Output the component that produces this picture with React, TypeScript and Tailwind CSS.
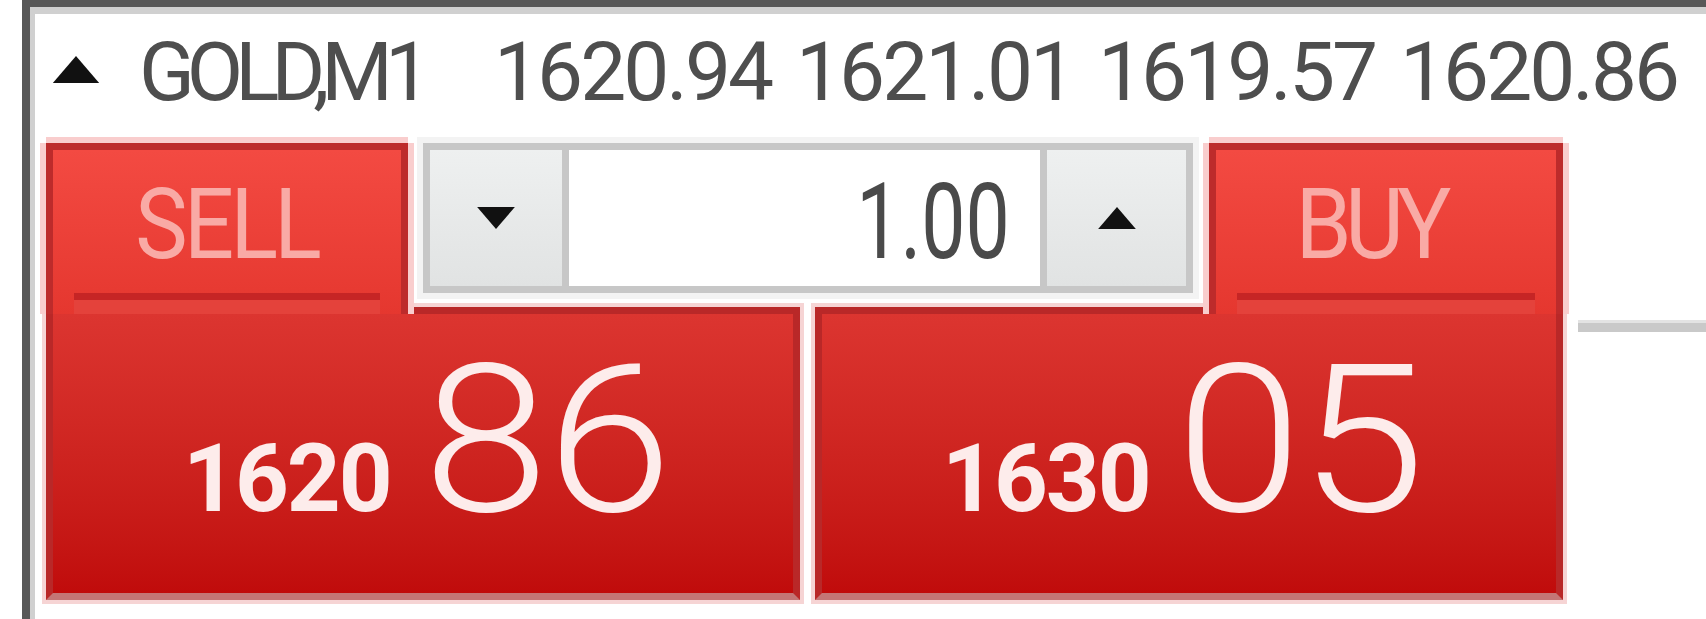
import React from "react";

const QUOTES = ["1620.94", "1621.01", "1619.57", "1620.86"];

/**
 * Small filled triangles used in the header and the lot spinner
 */
const Triangle = ({ up, className }: { up: boolean; className: string }) => (
  <svg className={className} viewBox="0 0 48 28" fill="#111">
    {up ? <polygon points="24,0 48,28 0,28" /> : <polygon points="0,0 48,0 24,28" />}
  </svg>
);

/**
 * Chart header: symbol, timeframe and OHLC values
 */
const ChartHeader: React.FC = () => (
  <div className="flex items-start pt-[17px] font-['Roboto','Liberation_Sans',sans-serif] text-[82px] leading-none text-[#4e4e4e]">
    <Triangle up className="ml-[17px] mt-[25px] w-[48px] h-[27px] shrink-0" />
    <span className="ml-[39px] w-[355px] shrink-0 tracking-[-8px]">GOLD,M1</span>
    {QUOTES.map((q) => (
      <span key={q} className="w-[302px] shrink-0 tracking-[-3px]">
        {q}
      </span>
    ))}
  </div>
);

interface TradeTabProps {
  label: string;
  className: string;
  labelClass: string;
}

// Red SELL / BUY tab sitting on top of its price box
const TradeTab: React.FC<TradeTabProps> = ({ label, className, labelClass }) => (
  <div
    className={`relative z-10 h-[171px] flex flex-col items-center border-[7px] border-b-0 border-[#bd2b2b] bg-linear-to-b from-[#f34a42] to-[#e5372f] shadow-[0_-6px_0_0_#f9cdcd,6px_0_0_0_#f9cdcd,-6px_0_0_0_#f9cdcd] ${className}`}
  >
    <span className={`inline-block pt-[26px] text-[98px] leading-none text-[#f9aaa5] ${labelClass}`}>{label}</span>
    <div className="mt-[19px] h-[7px] self-stretch mx-[21px] bg-[#c62525]" />
    <div className="flex-1 self-stretch mx-[21px] bg-[#e4423b]" />
  </div>
);

// Lot size spinner between the two tabs
const LotSpinner: React.FC = () => (
  <div className="ml-[15px] w-[770px] h-[150px] flex border-[7px] border-[#c7c7c7] shadow-[0_0_0_6px_#f3f3f3]">
    <div className="w-[132px] flex items-center justify-center bg-linear-to-b from-[#eef0f0] to-[#e1e3e3]">
      <Triangle up={false} className="w-[40px] h-[22px]" />
    </div>
    <div className="w-[7px] bg-[#c7c7c7]" />
    <div className="w-[471px] flex justify-end items-start pr-[30px] pt-[20px] bg-white">
      <span className="inline-block origin-right scale-x-75 text-[105px] leading-none text-[#4a4a4a]">1.00</span>
    </div>
    <div className="w-[7px] bg-[#c7c7c7]" />
    <div className="flex-1 flex items-center justify-center bg-linear-to-b from-[#eef0f0] to-[#e1e3e3]">
      <Triangle up className="w-[40px] h-[22px]" />
    </div>
  </div>
);

interface PriceBoxProps {
  big: string;
  pips: string;
  className: string;
  pipsClass: string;
}

// Big price box: figure in bold, last two digits large and light
const PriceBox: React.FC<PriceBoxProps> = ({ big, pips, className, pipsClass }) => (
  <div
    className={`h-[293px] flex items-baseline pt-[24px] border-[7px] border-[#b92828] border-b-[#c47676] bg-linear-to-b from-[#dc3530] to-[#c00b0b] shadow-[0_0_0_4px_#f6d4d4] text-[#fdeceb] ${className}`}
  >
    <span className="text-[94px] font-bold leading-none tracking-[-2px]">{big}</span>
    <span className={`inline-block origin-left scale-x-110 text-[206px] font-light leading-none tracking-[-2px] ${pipsClass}`}>
      {pips}
    </span>
  </div>
);

export default function App() {
  return (
    <div className="w-[1706px] h-[619px] overflow-hidden bg-white pl-[22px]">
      <div className="h-full border-l-[8px] border-t-[7px] border-[#585858]">
        <div className="h-full border-l-[5px] border-t-[7px] border-[#d0d0d0] bg-white">
          <ChartHeader />

          <div className="mt-[30px] font-['Roboto','Liberation_Sans',sans-serif]">
            <div className="flex items-start h-[164px]">
              <TradeTab label="SELL" className="ml-[11px] w-[362px]" labelClass="scale-x-90 tracking-[-4px]" />
              <LotSpinner />
              <TradeTab label="BUY" className="ml-[16px] w-[354px]" labelClass="mr-[32px] scale-x-[0.92] tracking-[-7px]" />
            </div>

            <div className="flex items-start">
              <PriceBox big="1620" pips="86" className="ml-[11px] w-[754px] pl-[130px]" pipsClass="ml-[32px]" />
              <PriceBox big="1630" pips="05" className="ml-[15px] w-[748px] pl-[120px]" pipsClass="ml-[26px]" />
              <div className="ml-[15px] mt-[13px] flex-1 h-[12px] border-t-[3px] border-[#e3e3e3] bg-[#c9c9c9]" />
            </div>
          </div>
        </div>
      </div>
    </div>
  );
}
